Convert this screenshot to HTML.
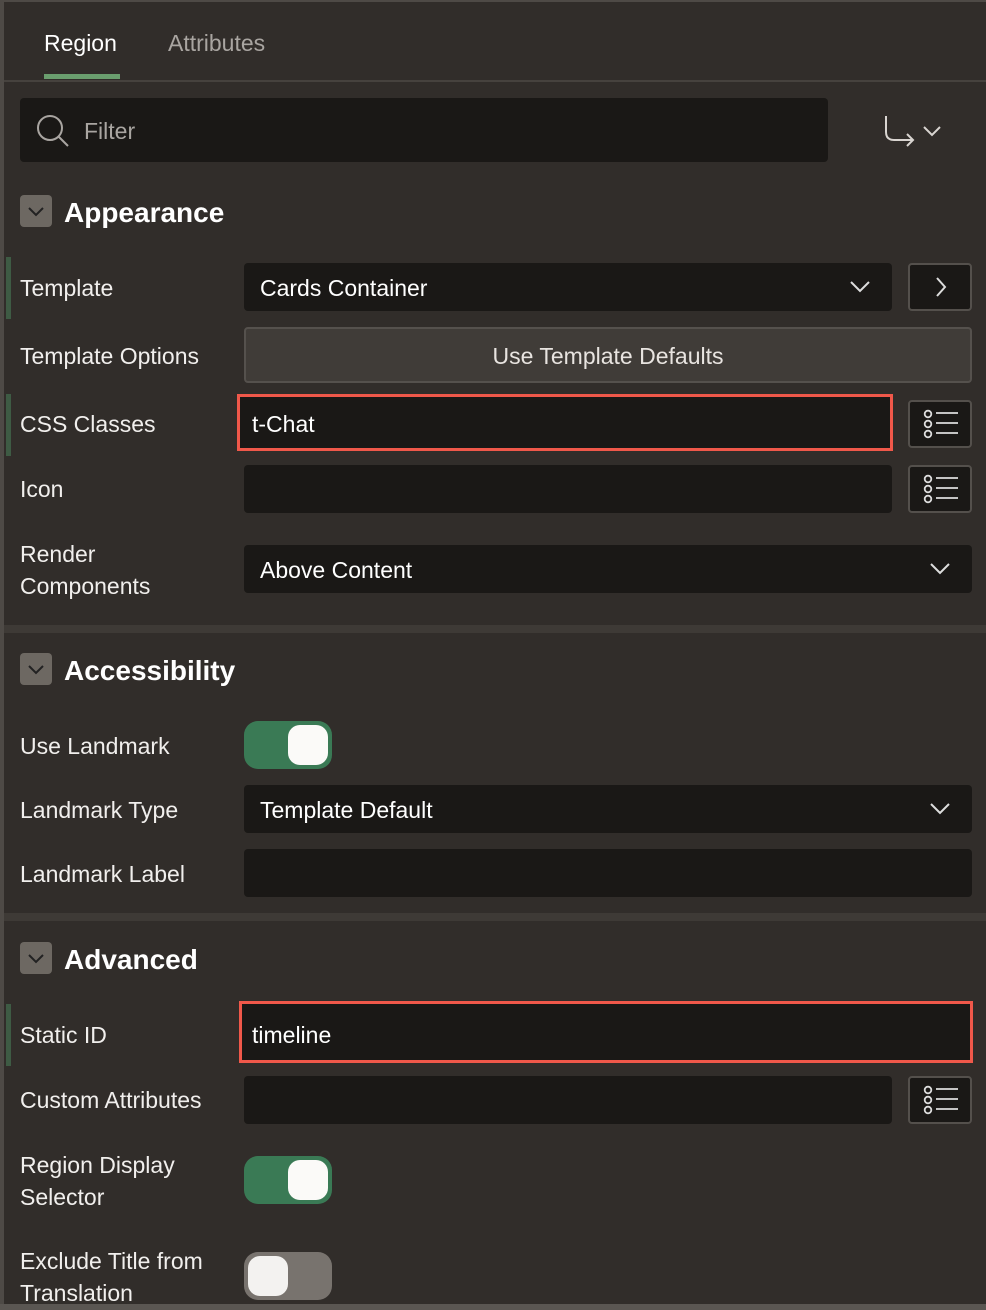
<!DOCTYPE html>
<html><head><style>
*{box-sizing:border-box;margin:0;padding:0}
body{width:986px;height:1310px;background:#312d2a;font-family:"Liberation Sans",sans-serif;color:#f1efed;position:relative;overflow:hidden}
.a{position:absolute}
.lbl{position:absolute;left:20px;font-size:23px;line-height:32px;color:#f1efed}
.inp{position:absolute;background:#1a1816;border-radius:4px}
.btn{position:absolute;background:#1a1816;border:2px solid #54504c;border-radius:4px}
.hd{position:absolute;left:64px;font-size:28px;font-weight:bold;color:#fff}
.cb{position:absolute;left:20px;width:32px;height:32px;background:#6d6862;border-radius:4px}
.sep{position:absolute;left:4px;right:0;height:8px;background:#3e3a36}
.bar{position:absolute;left:6px;width:5px;background:#3e5b44}
.val{position:absolute;font-size:23px;line-height:32px;color:#fff}
</style></head><body>
<div class="a" style="left:0;top:0;width:4px;height:1310px;background:#4e4a46"></div>
<div class="a" style="left:0;top:0;width:986px;height:2px;background:#4e4a46"></div>
<div class="a" style="left:0;top:1304px;width:986px;height:6px;background:#5a5652"></div>
<div class="a" style="left:44px;top:30px;font-size:23px;color:#fff">Region</div>
<div class="a" style="left:168px;top:30px;font-size:23px;color:#a9a5a1">Attributes</div>
<div class="a" style="left:44px;top:74px;width:76px;height:5px;background:#6a9e6e"></div>
<div class="a" style="left:4px;top:80px;width:982px;height:2px;background:#46423e"></div>
<div class="inp" style="left:20px;top:98px;width:808px;height:64px"></div>
<svg class="a" style="left:34px;top:112px" width="36" height="36" viewBox="0 0 36 36"><circle cx="16" cy="16" r="12" fill="none" stroke="#a9a5a1" stroke-width="2"/><line x1="25" y1="25" x2="34" y2="34" stroke="#a9a5a1" stroke-width="2"/></svg>
<div class="a" style="left:84px;top:118px;font-size:23px;color:#a9a5a1">Filter</div>
<svg class="a" style="left:880px;top:112px" width="66" height="40" viewBox="0 0 66 40"><path d="M6 4V20Q6 28 14 28H33M27 22L33 28L27 34" fill="none" stroke="#d9d5d1" stroke-width="2"/><path d="M44 15L52 23L60 15" fill="none" stroke="#d9d5d1" stroke-width="2"/></svg>
<div class="cb" style="top:195px"><svg width="32" height="32"><path d="M9 13L16 20L23 13" fill="none" stroke="#222" stroke-width="2"/></svg></div>
<div class="hd" style="top:197px">Appearance</div>
<div class="bar" style="top:257px;height:62px"></div>
<div class="lbl" style="top:272px">Template</div>
<div class="inp" style="left:244px;top:263px;width:648px;height:48px"></div>
<div class="val" style="left:260px;top:272px">Cards Container</div>
<svg class="a" style="left:848px;top:277px" width="24" height="20"><path d="M3 5L12 14L21 5" fill="none" stroke="#ddd" stroke-width="2"/></svg>
<div class="btn" style="left:908px;top:263px;width:64px;height:48px"><svg width="60" height="44"><path d="M27 13L35 22L27 31" fill="none" stroke="#ddd" stroke-width="2"/></svg></div>
<div class="lbl" style="top:340px">Template Options</div>
<div class="a" style="left:244px;top:327px;width:728px;height:56px;background:#403c38;border:2px solid #55514d;border-radius:4px;text-align:center;font-size:23px;line-height:54px;color:#e8e4e0">Use Template Defaults</div>
<div class="bar" style="top:394px;height:62px"></div>
<div class="lbl" style="top:408px">CSS Classes</div>
<div class="a" style="left:237px;top:394px;width:656px;height:57px;background:#1a1816;border:3px solid #f0584a"></div>
<div class="val" style="left:252px;top:408px">t-Chat</div>
<div class="lbl" style="top:473px">Icon</div>
<div class="inp" style="left:244px;top:465px;width:648px;height:48px"></div>
<div class="lbl" style="top:538px">Render<br>Components</div>
<div class="inp" style="left:244px;top:545px;width:728px;height:48px"></div>
<div class="val" style="left:260px;top:554px">Above Content</div>
<svg class="a" style="left:928px;top:559px" width="24" height="20"><path d="M3 5L12 14L21 5" fill="none" stroke="#ddd" stroke-width="2"/></svg>
<div class="sep" style="top:625px"></div>
<div class="cb" style="top:653px"><svg width="32" height="32"><path d="M9 13L16 20L23 13" fill="none" stroke="#222" stroke-width="2"/></svg></div>
<div class="hd" style="top:655px">Accessibility</div>
<div class="lbl" style="top:730px">Use Landmark</div>
<div class="a" style="left:244px;top:721px;width:88px;height:48px;background:#3a7a55;border-radius:14px"></div>
<div class="a" style="left:288px;top:725px;width:40px;height:40px;background:#fbfaf8;border-radius:12px"></div>
<div class="lbl" style="top:794px">Landmark Type</div>
<div class="inp" style="left:244px;top:785px;width:728px;height:48px"></div>
<div class="val" style="left:260px;top:794px">Template Default</div>
<svg class="a" style="left:928px;top:799px" width="24" height="20"><path d="M3 5L12 14L21 5" fill="none" stroke="#ddd" stroke-width="2"/></svg>
<div class="lbl" style="top:858px">Landmark Label</div>
<div class="inp" style="left:244px;top:849px;width:728px;height:48px"></div>
<div class="sep" style="top:913px"></div>
<div class="cb" style="top:942px"><svg width="32" height="32"><path d="M9 13L16 20L23 13" fill="none" stroke="#222" stroke-width="2"/></svg></div>
<div class="hd" style="top:944px">Advanced</div>
<div class="bar" style="top:1004px;height:62px"></div>
<div class="lbl" style="top:1019px">Static ID</div>
<div class="a" style="left:239px;top:1001px;width:734px;height:62px;background:#1a1816;border:3px solid #f0584a"></div>
<div class="val" style="left:252px;top:1019px">timeline</div>
<div class="lbl" style="top:1084px">Custom Attributes</div>
<div class="inp" style="left:244px;top:1076px;width:648px;height:48px"></div>
<div class="lbl" style="top:1149px">Region Display<br>Selector</div>
<div class="a" style="left:244px;top:1156px;width:88px;height:48px;background:#3a7a55;border-radius:14px"></div>
<div class="a" style="left:288px;top:1160px;width:40px;height:40px;background:#fbfaf8;border-radius:12px"></div>
<div class="lbl" style="top:1245px">Exclude Title from<br>Translation</div>
<div class="a" style="left:244px;top:1252px;width:88px;height:48px;background:#78736e;border-radius:14px"></div>
<div class="a" style="left:248px;top:1256px;width:40px;height:40px;background:#f3f2f0;border-radius:12px"></div>
<svg width="0" height="0" style="position:absolute"><defs><g id="li"><circle cx="18" cy="12" r="3.3" fill="none" stroke="#ddd" stroke-width="1.8"/><circle cx="18" cy="22" r="3.3" fill="none" stroke="#ddd" stroke-width="1.8"/><circle cx="18" cy="32" r="3.3" fill="none" stroke="#ddd" stroke-width="1.8"/><path d="M26 11H48M26 21H48M26 31H48" stroke="#ddd" stroke-width="1.8"/></g></defs></svg>
<div class="btn" style="left:908px;top:400px;width:64px;height:48px"><svg width="60" height="44"><use href="#li"/></svg></div>
<div class="btn" style="left:908px;top:465px;width:64px;height:48px"><svg width="60" height="44"><use href="#li"/></svg></div>
<div class="btn" style="left:908px;top:1076px;width:64px;height:48px"><svg width="60" height="44"><use href="#li"/></svg></div>
</body></html>
